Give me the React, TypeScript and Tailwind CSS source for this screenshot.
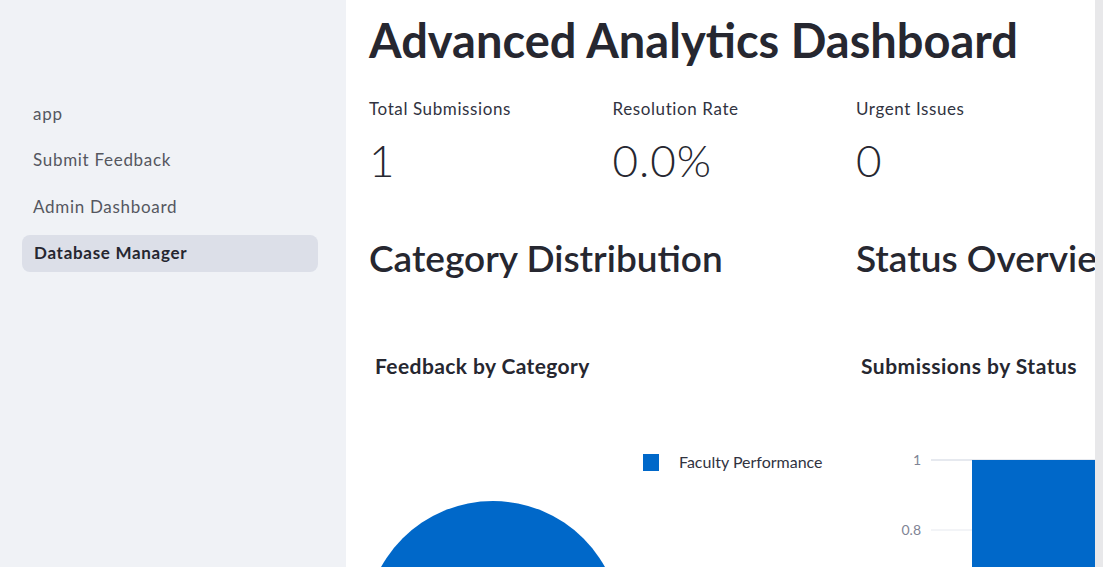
const navItems = ["app", "Submit Feedback", "Admin Dashboard", "Database Manager"];

const metrics = [
  { label: "Total Submissions", value: "1" },
  { label: "Resolution Rate", value: "0.0%" },
  { label: "Urgent Issues", value: "0" },
];

const font = { fontFamily: "Lato, 'Liberation Sans', sans-serif" };

const Sidebar = () => (
  <aside className="w-[346px] shrink-0 bg-[#f0f2f6] pt-[95px]">
    <nav className="flex flex-col gap-[9.5px] pl-[22px] pr-[28px]">
      {navItems.map((item) => {
        const active = item === "Database Manager";
        return (
          <div
            key={item}
            className={
              active
                ? "h-[37px] flex items-center pl-[12px] rounded-[8px] bg-[#dcdfe8] text-[17px] tracking-[0.7px] font-bold text-[#262730]"
                : "h-[37px] flex items-center pl-[11px] text-[17px] tracking-[0.7px] text-[#55575f]"
            }
          >
            {item}
          </div>
        );
      })}
    </nav>
  </aside>
);

const PieChart = () => (
  <div className="relative h-[290px]">
    <div className="absolute left-[6px] top-[72px] text-[21px] leading-[25px] tracking-[0.4px] font-bold text-[#262730]">
      Feedback by Category
    </div>
    <div className="absolute left-[274px] top-[169px] flex items-center">
      <span className="w-[16px] h-[17px] bg-[#0068c9]" />
      <span className="ml-[20px] text-[16px] text-[#31333f]">Faculty Performance</span>
    </div>
    <svg className="absolute left-0 top-[220px]" width="260" height="200">
      <circle cx="124" cy="128" r="128" fill="#0068c9" />
    </svg>
  </div>
);

const BarChart = () => (
  <div className="relative h-[290px]">
    <div className="absolute left-[5px] top-[72px] text-[21px] leading-[25px] tracking-[0.5px] font-bold text-[#262730]">
      Submissions by Status
    </div>
    <svg className="absolute left-0 top-[159px]" width="260" height="160">
      <line x1="75" y1="20" x2="260" y2="20" stroke="#e6e9ef" strokeWidth="2" />
      <line x1="75" y1="90" x2="260" y2="90" stroke="#e6e9ef" strokeWidth="1" />
      <text x="65" y="25" textAnchor="end" fontSize="14" fill="#808495" fontFamily="Lato, sans-serif">1</text>
      <text x="65" y="95" textAnchor="end" fontSize="14" fill="#808495" fontFamily="Lato, sans-serif">0.8</text>
      <rect x="116" y="20" width="144" height="140" fill="#0068c9" />
    </svg>
  </div>
);

export default function App() {
  return (
    <div className="flex h-[567px] w-full overflow-hidden bg-white text-[#31333f]" style={font}>
      <Sidebar />
      <main className="flex-1 overflow-hidden">
        <div className="w-[958px] ml-[23px]">
          <h1 className="mt-[12px] text-[47px] leading-[56px] font-bold text-[#262730]">
            Advanced Analytics Dashboard
          </h1>
          <div className="mt-[31px] grid grid-cols-4 gap-4">
            {metrics.map((m) => (
              <div key={m.label}>
                <div className="text-[17px] leading-[20px] tracking-[0.6px] text-[#31333f]">{m.label}</div>
                <div className="mt-[17px] text-[44px] leading-[48px] tracking-[1px] font-light text-[#262730]">
                  {m.value}
                </div>
              </div>
            ))}
          </div>
          <div className="mt-[51px] grid grid-cols-2 gap-4">
            <div>
              <h2 className="text-[37px] leading-[46px] font-semibold text-[#262730] whitespace-nowrap">
                Category Distribution
              </h2>
              <PieChart />
            </div>
            <div>
              <h2 className="text-[37px] leading-[46px] font-semibold text-[#262730] whitespace-nowrap">
                Status Overview
              </h2>
              <BarChart />
            </div>
          </div>
        </div>
      </main>
      <div className="w-[8px] shrink-0 bg-[#e8e8ea]" />
    </div>
  );
}
